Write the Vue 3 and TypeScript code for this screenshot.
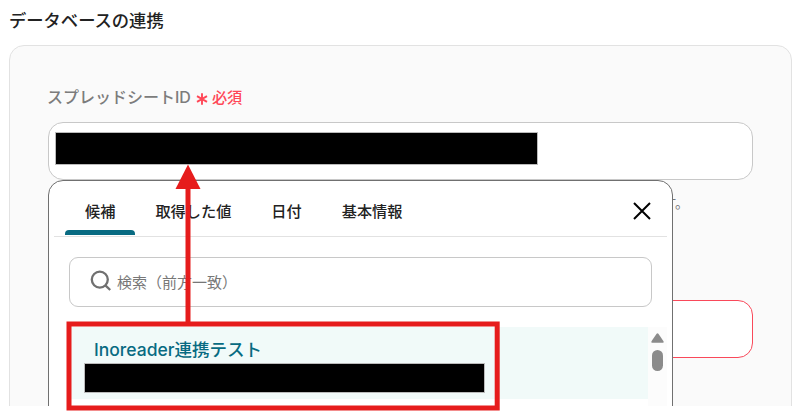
<template>
  <main class="page">
    <div class="viewport">
      <h2 class="title">データベースの連携</h2>
      <section class="panel">
        <div class="label-row">
          <label class="label" for="sheet-id">スプレッドシートID</label>
          <svg class="asterisk" width="12" height="12" viewBox="0 0 12 12">
            <path d="M6 0.2V11.8M1 3.1L11 8.9M11 3.1L1 8.9" />
          </svg>
          <span class="required">必須</span>
        </div>
        <div id="sheet-id" class="field">
          <div class="mask field-mask"></div>
        </div>
        <p class="hint">す。</p>
        <div class="field error"></div>
      </section>

      <div class="popup">
        <div class="popup-head">
          <nav class="tabs">
            <button
              v-for="(tab, i) in tabs"
              :key="tab"
              type="button"
              class="tab"
              :class="{ active: i === activeTab }"
              @click="activeTab = i"
            >
              {{ tab }}
            </button>
          </nav>
          <svg class="close" width="18" height="18" viewBox="0 0 18 18">
            <path d="M1 1L17 17M17 1L1 17" />
          </svg>
        </div>
        <div class="search">
          <svg class="search-icon" width="22" height="22" viewBox="0 0 22 22">
            <circle cx="9.8" cy="9.6" r="8" />
            <path d="M15.4 15.4L20.2 20" />
          </svg>
          <span class="placeholder">検索（前方一致）</span>
        </div>
        <div class="list">
          <div class="item">
            <span class="item-name">Inoreader連携テスト</span>
            <div class="mask item-mask"></div>
          </div>
          <div class="scrollbar">
            <svg width="13" height="10" viewBox="0 0 13 10">
              <path d="M5.6 0.8Q6.5 -0.3 7.4 0.8L12.5 8.2Q13 9.8 11.6 9.8H1.4Q0 9.8 0.5 8.2Z" />
            </svg>
            <div class="thumb"></div>
          </div>
        </div>
      </div>
    </div>

    <svg class="annotation" width="803" height="411" viewBox="0 0 803 411">
      <rect x="69" y="324" width="428.2" height="84" />
      <path class="line" d="M188 324V186" />
      <path class="head" d="M188 164.5L200.5 189H175.5Z" />
    </svg>
  </main>
</template>

<script setup lang="ts">
import { ref } from 'vue'

const tabs: string[] = ['候補', '取得した値', '日付', '基本情報']
const activeTab = ref(0)
</script>

<style>
body {
  background: #fff;
}
</style>

<style scoped>
.page {
  position: relative;
  width: 803px;
  height: 411px;
  overflow: hidden;
  font-family: Inter, "Noto Sans CJK JP", sans-serif;
  color: #222;
}

.viewport {
  position: relative;
  height: 406px;
  overflow: hidden;
}

.title {
  margin: 0;
  padding: 9px 0 0 9px;
  height: 36px;
  line-height: 24px;
  font-size: 17.3px;
  font-weight: 500;
}

.panel {
  box-sizing: border-box;
  width: 783px;
  height: 420px;
  margin-left: 9px;
  padding: 38px;
  border: 1px solid #e2e2e2;
  border-radius: 15px;
  background: #fafafa;
}

.label-row {
  display: flex;
  align-items: center;
  height: 26px;
  margin-bottom: 12px;
}

.label {
  font-size: 16px;
  font-weight: 500;
  line-height: 24px;
  margin-left: -1px;
  color: #7c7c7c;
}

.asterisk {
  margin: 4px 4px 0 5px;
  fill: none;
  stroke: #ff4757;
  stroke-width: 1.9;
}

.required {
  padding-top: 2px;
  font-size: 15.2px;
  font-weight: 500;
  line-height: 24px;
  color: #ff4757;
}

.field {
  box-sizing: border-box;
  width: 705px;
  height: 58px;
  padding: 9px 6px;
  border: 1px solid #c8c8c8;
  border-radius: 15px;
  background: #fff;
}

.field.error {
  border-color: #f9495a;
}

.mask {
  box-sizing: border-box;
  border: 1px solid #bbb;
  background: #000;
}

.field-mask {
  width: 483px;
  height: 33px;
}

.hint {
  width: 641px;
  height: 24px;
  margin: 11px 0 85px;
  font-size: 14px;
  line-height: 24px;
  text-align: right;
  color: #777;
}

.popup {
  position: absolute;
  top: 180px;
  left: 48px;
  box-sizing: border-box;
  width: 625px;
  height: 260px;
  padding: 0 5px;
  border: 1px solid #707070;
  border-radius: 15px;
  background: #fff;
}

.popup-head {
  display: flex;
  align-items: center;
  justify-content: space-between;
  height: 55px;
  padding: 0 16px 0 11px;
  border-bottom: 1px solid #e2e2e2;
}

.tabs {
  display: flex;
  height: 55px;
}

.tab {
  height: 54px;
  padding: 12px 20px 0;
  border: 0;
  border-bottom: 5px solid transparent;
  background: none;
  font: 500 15.2px/24px Inter, "Noto Sans CJK JP", sans-serif;
  color: #222;
}

.tab.active {
  position: relative;
}

.tab.active::after {
  content: "";
  position: absolute;
  right: 0;
  bottom: -5px;
  left: 0;
  height: 5px;
  border-radius: 4px 4px 0 0;
  background: #086b82;
}

.close {
  margin-top: 4px;
  fill: none;
  stroke: #000;
  stroke-width: 2;
}

.search {
  display: flex;
  align-items: center;
  box-sizing: border-box;
  width: 583px;
  height: 50px;
  margin: 20px 0 20px 15px;
  padding-left: 20px;
  border: 1px solid #c8c8c8;
  border-radius: 9px;
}

.search-icon {
  margin-bottom: 2px;
  fill: none;
  stroke: #707070;
  stroke-width: 2.3;
}

.placeholder {
  margin-left: 5px;
  font-size: 15px;
  line-height: 24px;
  padding-top: 1px;
  color: #777;
}

.list {
  display: flex;
  justify-content: space-between;
  height: 80px;
  padding-left: 15px;
}

.item {
  box-sizing: border-box;
  width: 579px;
  height: 72px;
  padding: 10px 15px;
  background: #f1faf9;
}

.item-name {
  display: block;
  height: 26px;
  padding-left: 10px;
  font-size: 17.5px;
  font-weight: 500;
  line-height: 25px;
  color: #086b82;
}

.item-mask {
  width: 401px;
  height: 30px;
}

.scrollbar {
  display: flex;
  flex-direction: column;
  align-items: center;
  width: 19px;
  padding-top: 6px;
  background: #fcfcfc;
}

.scrollbar svg {
  fill: #8b8b8b;
}

.thumb {
  width: 11px;
  height: 21px;
  margin-top: 7px;
  border-radius: 6px;
  background: #8b8b8b;
}

.annotation {
  position: absolute;
  top: 0;
  left: 0;
  fill: none;
  stroke: #e61c1c;
  stroke-width: 5;
}

.annotation .head {
  fill: #e61c1c;
  stroke: none;
}
</style>
